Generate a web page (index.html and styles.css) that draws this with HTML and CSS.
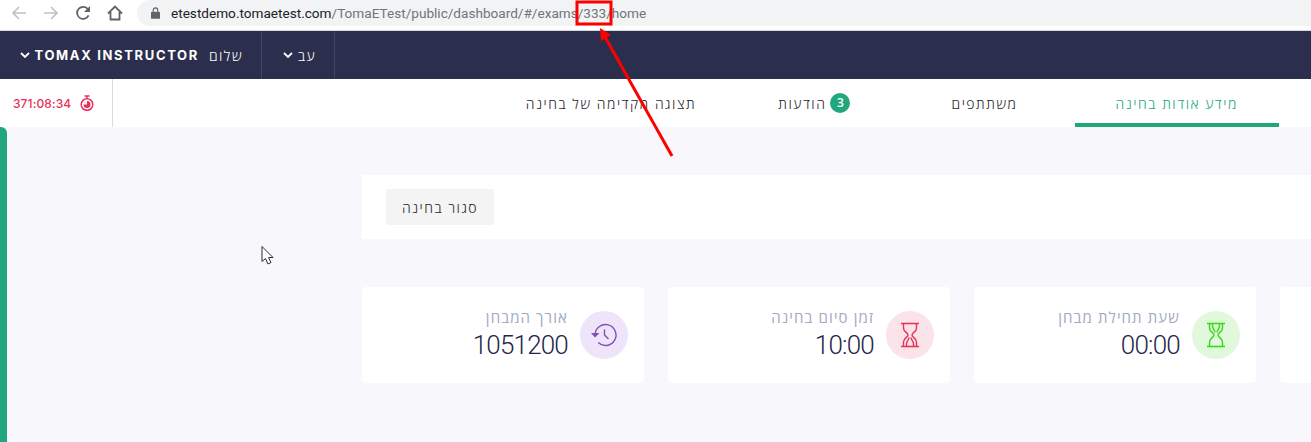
FILE: index.html
```html
<!DOCTYPE html>
<html lang="he">

<head>
    <meta charset="utf-8">
    <title>Exam home</title>
    <link rel="stylesheet" href="styles.css">
</head>

<body>
    <div class="browser">
        <div class="browser-btns">
            <svg class="b-icon" viewBox="0 0 16 16"><path class="light" d="M15 8H2M8 2L2 8l6 6"/></svg>
            <svg class="b-icon" viewBox="0 0 16 16"><path class="light" d="M1 8h13M8 2l6 6-6 6"/></svg>
            <svg class="b-icon" viewBox="0 0 16 16"><path class="dark" d="M13.6 10.400A6 6 0 1 1 13 4.400"/><path class="dark-fill" d="M15 1v6H9z"/></svg>
            <svg class="b-icon" viewBox="0 0 16 16"><path class="dark" d="M1 8.500L8 1.500l7 7M3.500 7v7.500h9V7"/></svg>
        </div>
        <div class="address">
            <svg class="lock" viewBox="0 0 10 13"><path d="M1 5h8a1 1 0 0 1 1 1v6a1 1 0 0 1-1 1H1a1 1 0 0 1-1-1V6a1 1 0 0 1 1-1z"/><path class="shackle" d="M2.500 5V3.300a2.500 2.500 0 0 1 5 0V5"/></svg>
            <span class="host">etestdemo.tomaetest.com</span><span class="path">/TomaETest/public/dashboard/#/exams/333/home</span>
        </div>
    </div>

    <header class="topbar">
        <div class="top-item lang">
            <span>עב</span>
            <svg class="chev" viewBox="0 0 10 6"><path d="M1 1l4 4 4-4"/></svg>
        </div>
        <div class="top-item user">
            <span class="hello">שלום</span>
            <span class="name">TOMAX INSTRUCTOR</span>
            <svg class="chev" viewBox="0 0 10 6"><path d="M1 1l4 4 4-4"/></svg>
        </div>
    </header>

    <nav class="tabs">
        <a class="tab active">מידע אודות בחינה</a>
        <a class="tab t2">משתתפים</a>
        <a class="tab t3"><span class="count">3</span>הודעות</a>
        <a class="tab t4">תצוגה מקדימה של בחינה</a>
        <div class="timer">
            <span>371:08:34</span>
            <svg class="watch" viewBox="0 0 14 16">
                <path class="watch-line" d="M4.500 1h5M7 1v2.500"/>
                <circle class="watch-line" cx="7" cy="9.500" r="5.800"/>
                <path class="watch-fill" d="M7 6v3.500H3.500A3.500 3.500 0 1 0 7 6z"/>
            </svg>
        </div>
    </nav>

    <div class="page">
        <div class="side"></div>
        <main class="content">
            <section class="panel">
                <button class="close-btn">סגור בחינה</button>
            </section>
            <section class="cards">
                <div class="card">
                    <div class="circle purple">
                        <svg viewBox="0 0 28 28"><path class="st" d="M5 14a10.500 10.500 0 1 1 3.200 7.600M14.500 8.500V14l4 4"/><path class="fi" d="M1 12h8.500L5 16.500z"/></svg>
                    </div>
                    <div class="info">
                        <div class="label">אורך המבחן</div>
                        <div class="value">1051200</div>
                    </div>
                </div>
                <div class="card">
                    <div class="circle pink">
                        <svg viewBox="0 0 28 28"><path class="st" d="M5 2.500h18M5 25.500h18M7.500 2.500V7c0 4 4.500 4.500 4.500 7s-4.500 3-4.500 7v4.500M20.500 2.500V7c0 4-4.500 4.500-4.500 7s4.500 3 4.500 7v4.500M10.500 25.500V23c0-3 2.500-4 2.500-6.500M17.500 25.500V23c0-3-2.500-4-2.500-6.500"/></svg>
                    </div>
                    <div class="info">
                        <div class="label">זמן סיום בחינה</div>
                        <div class="value">10:00</div>
                    </div>
                </div>
                <div class="card">
                    <div class="circle green">
                        <svg viewBox="0 0 28 28"><path class="st" d="M5 2.500h18M5 25.500h18M7.500 2.500V7c0 4 4.500 4.500 4.500 7s-4.500 3-4.500 7v4.500M20.500 2.500V7c0 4-4.500 4.500-4.500 7s4.500 3 4.500 7v4.500M10.500 2.500V5c0 3 2.500 4 2.500 6.500M17.500 2.500V5c0 3-2.500 4-2.500 6.500"/></svg>
                    </div>
                    <div class="info">
                        <div class="label">שעת תחילת מבחן</div>
                        <div class="value">00:00</div>
                    </div>
                </div>
                <div class="card card-cut"></div>
            </section>
        </main>
    </div>

    <!-- red markup drawn on top of the screenshot -->
    <svg class="markup" viewBox="0 0 1311 442">
        <rect x="577" y="2" width="34" height="22" fill="none" stroke="#f00" stroke-width="3"/>
        <path d="M672 156L605 37" fill="none" stroke="#f00" stroke-width="3"/>
        <path d="M600 28l11 7-10 6z" fill="#f00"/>
        <path d="M262 246.500v15l3.500-3 2.500 5.500 3-1.500-2.500-5h4.500z" fill="#fff" stroke="#2b2b33" stroke-width="1"/>
    </svg>
</body>

</html>
```
FILE: styles.css
```css
* {
    box-sizing: border-box;
}

html,
body {
    margin: 0;
    height: 442px;
    overflow: hidden;
}

body {
    position: relative;
    display: flex;
    flex-direction: column;
    background: #f7f7fc;
    font-family: "Open Sans", "DejaVu Sans", sans-serif;
    color: #2b2e4c;
}

/* browser chrome */
.browser {
    display: flex;
    height: 31px;
    background: #fff;
    border-bottom: 1px solid #d6d8da;
    padding-bottom: 4px;
}

.browser-btns {
    display: flex;
    align-items: center;
    gap: 16px;
    width: 137px;
    padding-left: 11px;
}

.b-icon {
    width: 16px;
    height: 16px;
    flex: none;
}

.light {
    fill: none;
    stroke: #bdc1c6;
    stroke-width: 1.6;
}

.dark {
    fill: none;
    stroke: #5f6368;
    stroke-width: 1.8;
}

.dark-fill {
    fill: #5f6368;
}

.address {
    flex: 1;
    display: flex;
    align-items: center;
    padding-left: 14px;
    background: #f1f3f4;
    border-radius: 13px 0 0 13px;
    font-family: Roboto, sans-serif;
    font-size: 13.6px;
}

.lock {
    width: 9px;
    height: 12px;
    margin-right: 11px;
    fill: #5f6368;
}

.lock .shackle {
    fill: none;
    stroke: #5f6368;
    stroke-width: 1.3;
}

.host {
    color: #202124;
}

.path {
    color: #70757a;
}

/* navy header */
.topbar {
    direction: rtl;
    display: flex;
    justify-content: flex-end;
    height: 48px;
    background: #2b2e4c;
    color: #fff;
}

.top-item {
    display: flex;
    align-items: center;
}

.lang {
    width: 74px;
    padding-right: 18px;
    gap: 5px;
    font-size: 14px;
    font-weight: 300;
    letter-spacing: 1.4px;
    border-left: 1px solid #42456a;
    border-right: 1px solid #42456a;
}

.lang .chev {
    margin-right: 0;
}

.user {
    width: 261px;
    padding-right: 18px;
}

.hello {
    font-size: 14px;
    font-weight: 300;
    letter-spacing: 1.5px;
    margin-left: 10px;
}

.name {
    font-family: Inter, sans-serif;
    font-size: 13px;
    font-weight: 700;
    letter-spacing: 1.65px;
}

.chev {
    width: 10px;
    height: 6px;
    margin-right: 5px;
    fill: none;
    stroke: #fff;
    stroke-width: 1.8;
}

/* tabs */
.tabs {
    direction: rtl;
    display: flex;
    height: 48px;
    padding-right: 32px;
    background: #fff;
}

.tab {
    display: flex;
    align-items: center;
    gap: 4px;
    padding: 4px 41px 0;
    font-size: 14px;
    font-weight: 300;
    letter-spacing: 1.55px;
    border-bottom: 4px solid transparent;
    color: #1f1f2b;
}

.tab.active {
    color: #22a67e;
    border-bottom-color: #22a67e;
}

.t2 {
    margin-right: 16px;
}

.t3 {
    margin-right: 19px;
}

.count {
    width: 20px;
    height: 20px;
    border-radius: 50%;
    background: #22a67e;
    color: #fff;
    font-size: 12px;
    font-weight: 600;
    letter-spacing: 0;
    line-height: 20px;
    text-align: center;
}

.timer {
    direction: ltr;
    display: flex;
    align-items: center;
    gap: 9px;
    width: 113px;
    margin-right: auto;
    padding-left: 13px;
    border-right: 1px solid #dcdcdc;
    color: #e8315a;
    font-family: Inter, sans-serif;
    font-size: 12px;
    font-weight: 500;
    letter-spacing: .1px;
}

.watch {
    width: 14px;
    height: 16px;
}

.watch-line {
    fill: none;
    stroke: #e8315a;
    stroke-width: 1.5;
}

.watch-fill {
    fill: #e8315a;
}

/* page body */
.page {
    flex: 1;
    display: flex;
    min-height: 0;
}

.side {
    width: 7px;
    background: #22a67e;
    border-radius: 0 6px 0 0;
}

.content {
    flex: 1;
    min-width: 0;
    padding: 48px 0 0 355px;
}

.panel {
    display: flex;
    height: 64px;
    padding: 14px 24px;
    background: #fff;
}

.close-btn {
    direction: rtl;
    width: 108px;
    height: 36px;
    border: 0;
    background: #f4f4f4;
    color: #1f1f2b;
    font-family: inherit;
    font-size: 14px;
    font-weight: 300;
    letter-spacing: 1.5px;
}

.cards {
    display: grid;
    grid-template-columns: repeat(3, 282px) 1fr;
    gap: 24px;
    margin-top: 48px;
}

.card {
    direction: rtl;
    display: flex;
    align-items: center;
    gap: 12px;
    height: 96px;
    padding: 0 16px;
    background: #fff;
    border-radius: 4px;
}

.card-cut {
    padding: 0;
    border-radius: 4px 0 0 4px;
}

.circle {
    display: flex;
    align-items: center;
    justify-content: center;
    width: 48px;
    height: 48px;
    border-radius: 50%;
}

.circle svg {
    width: 28px;
    height: 28px;
}

.st {
    fill: none;
    stroke: currentColor;
    stroke-width: 1.4;
}

.fi {
    fill: currentColor;
}

.purple {
    background: #eee5fb;
    color: #7f4fb5;
}

.pink {
    background: #fae3e9;
    color: #e8315a;
}

.green {
    background: #e2f8dc;
    color: #2ddc0e;
}

.label {
    font-size: 15px;
    line-height: 20px;
    color: #a1aabf;
    letter-spacing: 1.1px;
}

.value {
    font-family: Roboto, sans-serif;
    font-size: 26px;
    font-weight: 300;
    line-height: 36px;
    letter-spacing: -.8px;
    color: #23264a;
}

.markup {
    position: absolute;
    left: 0;
    top: 0;
    width: 1311px;
    height: 442px;
    pointer-events: none;
}
```
